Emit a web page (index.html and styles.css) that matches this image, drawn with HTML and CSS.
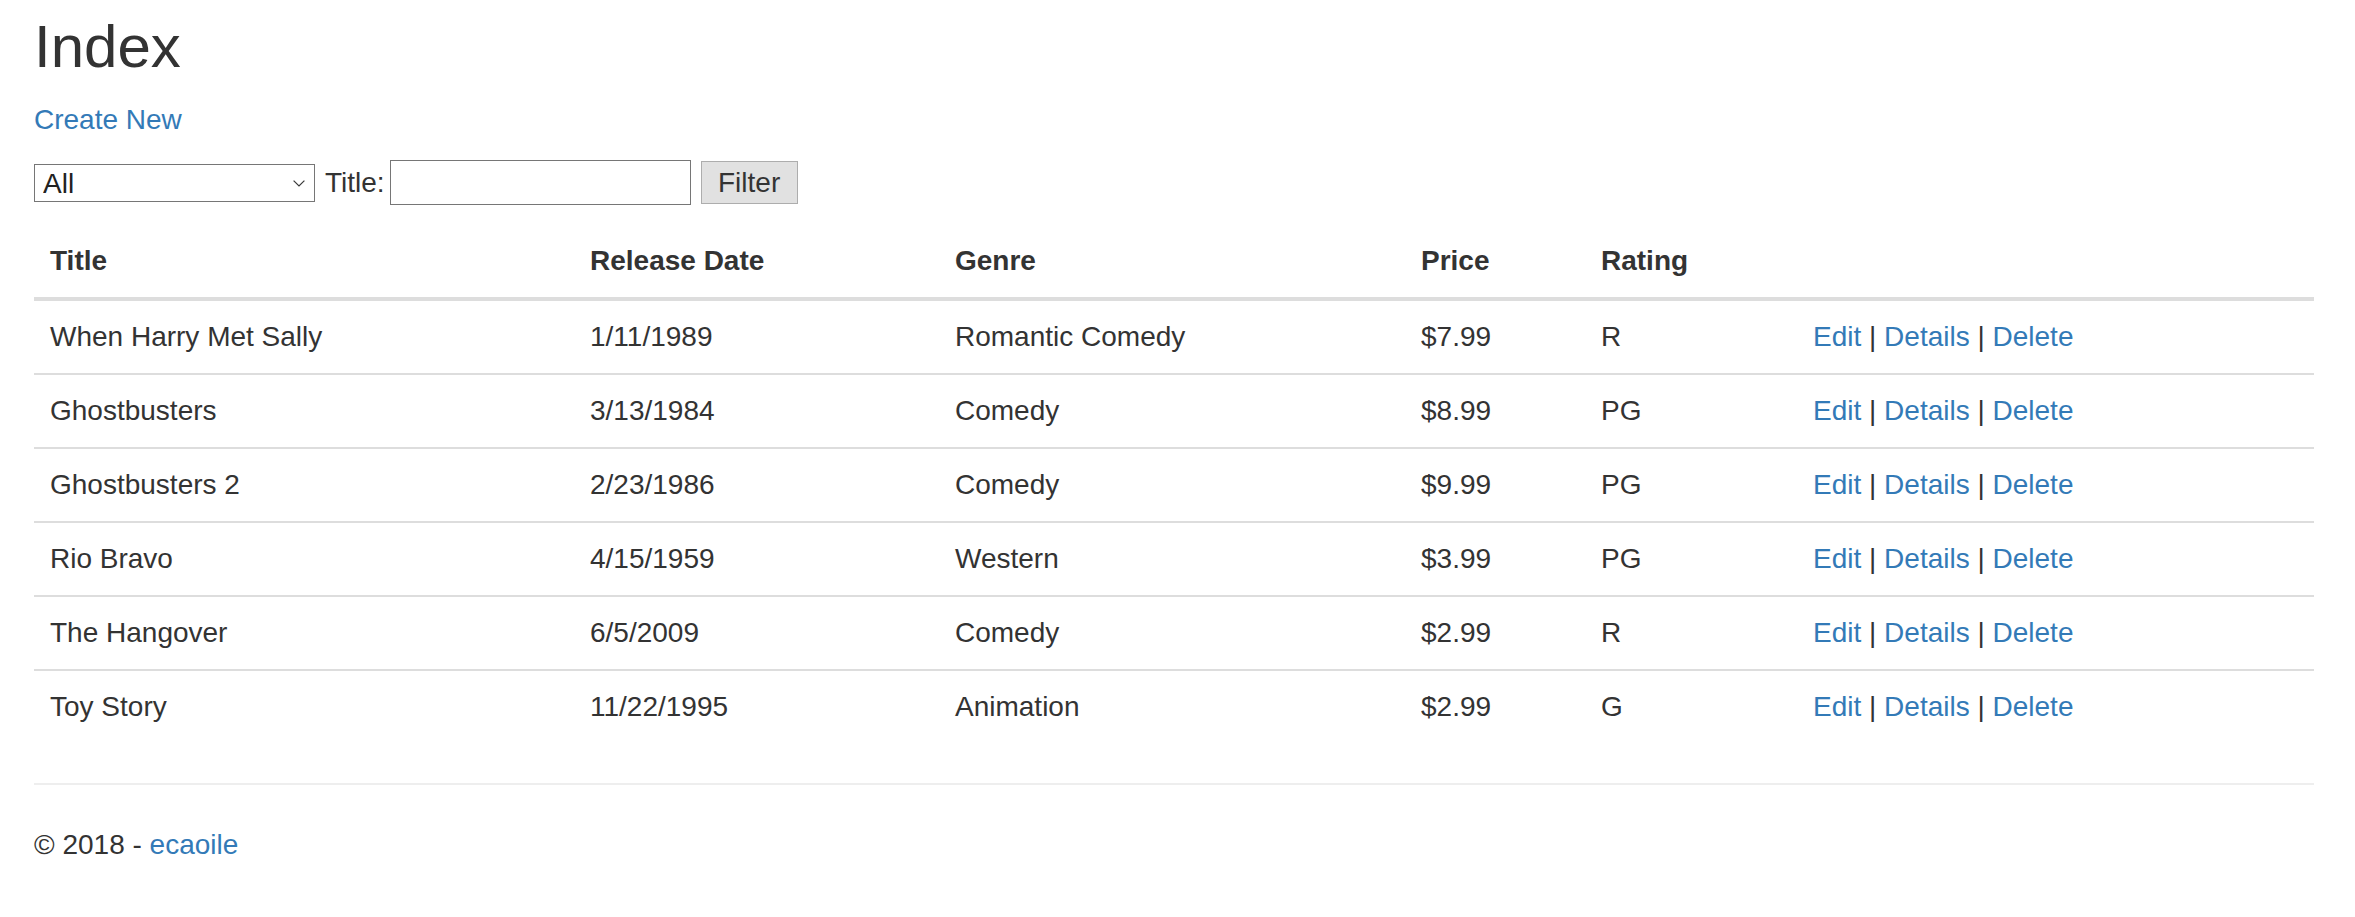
FILE: index.html
```html
<!DOCTYPE html>
<html lang="en">
<head>
<meta charset="utf-8">
<title>Index</title>
<link rel="stylesheet" href="styles.css">
</head>
<body>
<div class="container">
  <h2 class="page-title">Index</h2>
  <p class="create"><a href="#">Create New</a></p>
  <form class="filter-form">
    <span class="select-wrap">
      <select class="genre-select">
        <option>All</option>
      </select>
      <svg class="chevron" width="12" height="7" viewBox="0 0 12 7"><path d="M0.6 0.6 L6 6 L11.4 0.6" fill="none" stroke="#3a3a3a" stroke-width="1.2"/></svg>
    </span>
    <label class="title-label">Title:</label>
    <input class="title-input" type="text">
    <button class="filter-btn" type="button">Filter</button>
  </form>
  <table class="movies">
    <colgroup>
      <col class="c-title"><col class="c-date"><col class="c-genre"><col class="c-price"><col class="c-rating"><col class="c-actions">
    </colgroup>
    <thead>
      <tr><th>Title</th><th>Release Date</th><th>Genre</th><th>Price</th><th>Rating</th><th></th></tr>
    </thead>
    <tbody>
      <tr><td>When Harry Met Sally</td><td>1/11/1989</td><td>Romantic Comedy</td><td>$7.99</td><td>R</td><td><a href="#">Edit</a> | <a href="#">Details</a> | <a href="#">Delete</a></td></tr>
      <tr><td>Ghostbusters</td><td>3/13/1984</td><td>Comedy</td><td>$8.99</td><td>PG</td><td><a href="#">Edit</a> | <a href="#">Details</a> | <a href="#">Delete</a></td></tr>
      <tr><td>Ghostbusters 2</td><td>2/23/1986</td><td>Comedy</td><td>$9.99</td><td>PG</td><td><a href="#">Edit</a> | <a href="#">Details</a> | <a href="#">Delete</a></td></tr>
      <tr><td>Rio Bravo</td><td>4/15/1959</td><td>Western</td><td>$3.99</td><td>PG</td><td><a href="#">Edit</a> | <a href="#">Details</a> | <a href="#">Delete</a></td></tr>
      <tr><td>The Hangover</td><td>6/5/2009</td><td>Comedy</td><td>$2.99</td><td>R</td><td><a href="#">Edit</a> | <a href="#">Details</a> | <a href="#">Delete</a></td></tr>
      <tr><td>Toy Story</td><td>11/22/1995</td><td>Animation</td><td>$2.99</td><td>G</td><td><a href="#">Edit</a> | <a href="#">Details</a> | <a href="#">Delete</a></td></tr>
    </tbody>
  </table>
  <hr class="divider">
  <footer class="footer">
    <p>&copy; 2018 - <a href="#">ecaoile</a></p>
  </footer>
</div>
</body>
</html>
```
FILE: styles.css
```css
html, body {
  margin: 0;
  padding: 0;
  background: #fff;
}
body {
  font-family: "Liberation Sans", Arial, Helvetica, sans-serif;
  font-size: 28px;
  line-height: 40px;
  color: #333;
}
a {
  color: #337ab7;
  text-decoration: none;
}
.container {
  padding: 14px 41px 0 34px;
}
.page-title {
  font-size: 60px;
  line-height: 66px;
  font-weight: normal;
  margin: 0 0 20px 0;
}
.create {
  margin: 0 0 20px 0;
}
.filter-form {
  display: flex;
  align-items: center;
  height: 45px;
  margin: 0 0 20px 0;
}
.select-wrap {
  position: relative;
  display: block;
  width: 281px;
  height: 38px;
}
.genre-select {
  -webkit-appearance: none;
  appearance: none;
  box-sizing: border-box;
  width: 281px;
  height: 38px;
  border: 1px solid #767676;
  border-radius: 0;
  background: #fff;
  padding: 0 0 0 8px;
  margin: 0;
  font-family: inherit;
  font-size: 28px;
  color: #222;
}
.chevron {
  position: absolute;
  right: 10px;
  top: 16px;
  pointer-events: none;
}
.title-label {
  margin: 0 5px 0 10px;
  line-height: 40px;
}
.title-input {
  box-sizing: border-box;
  width: 301px;
  height: 45px;
  border: 1px solid #767676;
  border-radius: 0;
  margin: 0 10px 0 0;
  padding: 0 6px;
  font-family: inherit;
  font-size: 28px;
}
.filter-btn {
  box-sizing: border-box;
  width: 97px;
  height: 43px;
  background: #e1e1e1;
  border: 1px solid #adadad;
  border-radius: 0;
  padding: 0;
  margin: 0;
  font-family: inherit;
  font-size: 28px;
  color: #333;
}
.movies {
  width: 2280px;
  table-layout: fixed;
  border-collapse: collapse;
  border-spacing: 0;
  margin: 0 0 40px 0;
}
.c-title { width: 540px; }
.c-date { width: 365px; }
.c-genre { width: 466px; }
.c-price { width: 180px; }
.c-rating { width: 212px; }
.c-actions { width: 517px; }
.movies th,
.movies td {
  padding: 16px;
  line-height: 40px;
  text-align: left;
  vertical-align: top;
  white-space: nowrap;
}
.movies th {
  font-weight: bold;
  border-bottom: 4px solid #ddd;
}
.movies td {
  border-top: 2px solid #ddd;
}
.divider {
  border: 0;
  border-top: 2px solid #eee;
  margin: 40px 0;
  height: 0;
}
.footer p {
  margin: 0 0 20px 0;
}
```
